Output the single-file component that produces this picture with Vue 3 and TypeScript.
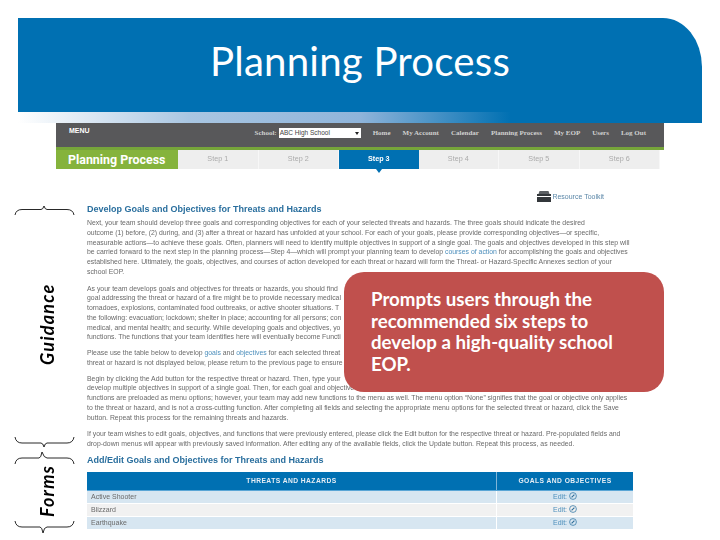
<script setup lang="ts">
const navLinks = ['Home', 'My Account', 'Calendar', 'Planning Process', 'My EOP', 'Users', 'Log Out']
const steps = ['Step 1', 'Step 2', 'Step 3', 'Step 4', 'Step 5', 'Step 6']
const rows = ['Active Shooter', 'Blizzard', 'Earthquake']
const braces = [
  'M15 215 Q16 209.5 22 209.5 L41 209.5 Q43 209.5 44 206 Q45 209.5 47 209.5 L67 209.5 Q73 209.5 74 215',
  'M15 437 Q16 443 22 443 L41 443 Q43 443 44 447 Q45 443 47 443 L67 443 Q73 443 74 437',
  'M15 464 Q16 458 22 458 L39 458 Q41 458 42 452 Q44 458 47 458 L67 458 Q73 458 74 464',
  'M15 521 Q16 527 22 527 L40 527 Q42 527 43 533 Q44 527 47 527 L67 527 Q73 527 74 521',
]
</script>

<template>
  <div class="slide">
    <header class="banner">
      <h1>Planning Process</h1>
      <div class="fade"></div>
    </header>

    <main class="page">
      <nav class="menu">
        <strong class="menu-title">MENU</strong>
        <div class="menu-links">
          <span class="school">School:</span>
          <span class="select">ABC High School<i></i></span>
          <span v-for="link in navLinks" :key="link">{{ link }}</span>
        </div>
      </nav>
      <div class="steps">
        <div class="steps-title">Planning Process</div>
        <div v-for="step in steps" :key="step" class="step" :class="{ active: step === 'Step 3' }">{{ step }}</div>
      </div>

      <div class="toolkit">
        <svg width="16" height="13" viewBox="0 0 15 13">
          <path d="M3 1h9l1 3H2z" fill="#5b5f63" />
          <rect x="0.5" y="4" width="14" height="8" fill="#33373b" />
          <rect x="0.5" y="6" width="14" height="1" fill="#fff" />
        </svg>
        <span>Resource Toolkit</span>
      </div>

      <section class="article">
        <h2>Develop Goals and Objectives for Threats and Hazards</h2>
        <p class="wide-gap">
          Next, your team should develop three goals and corresponding objectives for each of your selected threats and hazards. The three goals should indicate the desired<br>
          outcome (1) before, (2) during, and (3) after a threat or hazard has unfolded at your school. For each of your goals, please provide corresponding objectives—or specific,<br>
          measurable actions—to achieve these goals. Often, planners will need to identify multiple objectives in support of a single goal. The goals and objectives developed in this step will<br>
          be carried forward to the next step in the planning process—Step 4—which will prompt your planning team to develop <a>courses of action</a> for accomplishing the goals and objectives<br>
          established here. Ultimately, the goals, objectives, and courses of action developed for each threat or hazard will form the Threat- or Hazard-Specific Annexes section of your<br>
          school EOP.
        </p>
        <p>
          As your team develops goals and objectives for threats or hazards, you should find<br>
          goal addressing the threat or hazard of a fire might be to provide necessary medical<br>
          tornadoes, explosions, contaminated food outbreaks, or active shooter situations. T<br>
          the following: evacuation; lockdown; shelter in place; accounting for all persons; con<br>
          medical, and mental health; and security. While developing goals and objectives, yo<br>
          functions. The functions that your team identifies here will eventually become Functi
        </p>
        <p>
          Please use the table below to develop <a>goals</a> and <a>objectives</a> for each selected threat<br>
          threat or hazard is not displayed below, please return to the previous page to ensure
        </p>
        <p class="wide-gap">
          Begin by clicking the Add button for the respective threat or hazard. Then, type your<br>
          develop multiple objectives in support of a single goal. Then, for each goal and objective<br>
          functions are preloaded as menu options; however, your team may add new functions to the menu as well. The menu option “None” signifies that the goal or objective only applies<br>
          to the threat or hazard, and is not a cross-cutting function. After completing all fields and selecting the appropriate menu options for the selected threat or hazard, click the Save<br>
          button. Repeat this process for the remaining threats and hazards.
        </p>
        <p>
          If your team wishes to edit goals, objectives, and functions that were previously entered, please click the Edit button for the respective threat or hazard. Pre-populated fields and<br>
          drop-down menus will appear with previously saved information. After editing any of the available fields, click the Update button. Repeat this process, as needed.
        </p>
        <h2 class="table-heading">Add/Edit Goals and Objectives for Threats and Hazards</h2>
        <table>
          <thead>
            <tr><th>THREATS AND HAZARDS</th><th>GOALS AND OBJECTIVES</th></tr>
          </thead>
          <tbody>
            <tr v-for="row in rows" :key="row">
              <td>{{ row }}</td>
              <td class="edit">
                Edit:
                <svg width="8" height="8" viewBox="0 0 8 8">
                  <circle cx="4" cy="4" r="3.4" fill="none" stroke="#3a7ca8" stroke-width="0.8" />
                  <path d="M2.6 5.4 L5.4 2.6" stroke="#2a6a96" stroke-width="1.1" />
                </svg>
              </td>
            </tr>
          </tbody>
        </table>
      </section>
    </main>

    <svg class="braces" width="720" height="540" viewBox="0 0 720 540">
      <path v-for="d in braces" :key="d" :d="d" fill="none" stroke="#111" stroke-width="0.9" />
    </svg>
    <div class="side guidance">Guidance</div>
    <div class="side forms">Forms</div>

    <div class="callout">
      Prompts users through the<br>
      recommended six steps to<br>
      develop a high-quality school<br>
      EOP.
    </div>
  </div>
</template>

<style>
html, body { margin: 0; background: #fff; }
</style>

<style scoped>
.slide {
  position: relative;
  width: 720px;
  height: 540px;
  overflow: hidden;
  background: #fff;
  font-family: "Liberation Sans", Arial, sans-serif;
}
.banner {
  position: relative;
  margin: 18px 18px 0;
  height: 105px;
  background: #0070b2;
  border-top-right-radius: 39px 49px;
  display: flex;
  justify-content: center;
}
.banner h1 {
  margin: 18px 0 0;
  height: 50px;
  font: 400 40.2px/50px Lato, "Open Sans", sans-serif;
  color: #fff;
  letter-spacing: 0.2px;
}
.fade {
  position: absolute;
  left: 0;
  right: 0;
  bottom: 0;
  height: 11px;
  background: linear-gradient(90deg, #fff 0%, #a9c6e2 25%, #8fb4da 50%, #0070b2 72%, #0070b2 100%);
}
.page {
  margin-left: 56px;
  width: 608px;
  filter: blur(0.3px);
}
.menu {
  height: 24px;
  background: #58585a;
  border-bottom: 3px solid #76a53a;
  display: flex;
  justify-content: space-between;
  color: #d0d0d0;
}
.menu-title {
  margin: 2px 0 0 13px;
  font-size: 7px;
  line-height: 12px;
  color: #fff;
}
.menu-links {
  display: flex;
  align-items: center;
  gap: 12px;
  margin: -2px 18px 0 0;
  height: 23px;
  font: 700 7px "Liberation Serif", serif;
}
.school { margin-right: -10px; }
.select {
  position: relative;
  width: 82px;
  height: 10px;
  line-height: 10px;
  background: #fff;
  color: #444;
  padding-left: 1px;
  box-sizing: border-box;
  font-family: "Liberation Sans", sans-serif;
  font-size: 6.5px;
  font-weight: 400;
}
.select i {
  position: absolute;
  right: 2px;
  top: 4px;
  border: 2px solid transparent;
  border-top: 3px solid #222;
  border-bottom: 0;
}
.steps {
  display: flex;
  width: 604px;
  height: 19px;
  background: #eee;
}
.steps-title {
  width: 122px;
  background: #85b33c;
  color: #fff;
  font: 700 12.4px/19px Roboto, sans-serif;
  padding-left: 12px;
  box-sizing: border-box;
  white-space: nowrap;
}
.step {
  position: relative;
  flex: 1;
  text-align: center;
  font-size: 7.2px;
  line-height: 17px;
  color: #aaa;
  border-right: 1px solid #f7f7f7;
}
.step.active {
  background: #0070b2;
  color: #fff;
  font-weight: 700;
  border-right: 0;
}
.step.active::after {
  content: "";
  position: absolute;
  left: 50%;
  bottom: -4px;
  margin-left: -3px;
  border: 3px solid transparent;
  border-top: 4px solid #0070b2;
  border-bottom: 0;
}
.toolkit {
  display: flex;
  align-items: center;
  justify-content: flex-end;
  gap: 0;
  height: 14px;
  margin: 20px 60px 0 0;
  font-size: 7px;
  color: #5b87a8;
}
.article {
  margin: 1px 0 0 31px;
  color: #6a6a6a;
  font-size: 6.87px;
  line-height: 9.75px;
}
.article h2 {
  margin: 0 0 4px;
  font-size: 9px;
  line-height: 10px;
  font-weight: 700;
  color: #2a6f9e;
}
.article p {
  margin: 0 0 6px;
  white-space: nowrap;
}
.article .wide-gap { margin-bottom: 7px; }
.article a { color: #4d8fbc; }
.article .table-heading {
  margin: 6px 0 7px;
}
table {
  width: 546px;
  border-collapse: collapse;
  table-layout: fixed;
}
th {
  height: 18px;
  padding: 0;
  background: #0070b2;
  color: #e6eef5;
  font-size: 6.7px;
  letter-spacing: 0.45px;
  border-left: 1px solid #7fb5d8;
  border-bottom: 1px solid #5aa6d6;
}
th:first-child { border-left: 0; }
th:last-child, td:last-child { width: 136px; }
td {
  height: 12px;
  padding: 0 0 0 4px;
  font-size: 7px;
  line-height: 10px;
  color: #6a6a6a;
  border-left: 1px solid #fff;
  border-bottom: 1px solid #fff;
}
td:first-child { border-left: 0; }
tbody tr:nth-child(odd) td { background: #d7e6f1; }
tbody tr:nth-child(even) td { background: #f1f1f1; }
.edit {
  text-align: center;
  padding: 0;
  color: #4d8fbc;
}
.edit svg { vertical-align: -1px; }
.braces {
  position: absolute;
  left: 0;
  top: 0;
  pointer-events: none;
}
.side {
  position: absolute;
  left: 38px;
  width: 18px;
  writing-mode: vertical-rl;
  transform: rotate(180deg);
  font: italic 700 18px/18px Lato, "Open Sans", sans-serif;
  letter-spacing: 1.2px;
  color: #000;
  text-align: center;
  white-space: nowrap;
}
.guidance { top: 283px; height: 82px; }
.forms { top: 465px; height: 52px; }
.callout {
  position: absolute;
  left: 344px;
  top: 272px;
  width: 320px;
  height: 120px;
  box-sizing: border-box;
  padding: 17px 0 0 27px;
  background: #c0504d;
  border-radius: 20px;
  color: #fff;
  font: 700 18.7px/21.7px Lato, "Open Sans", sans-serif;
}
</style>
